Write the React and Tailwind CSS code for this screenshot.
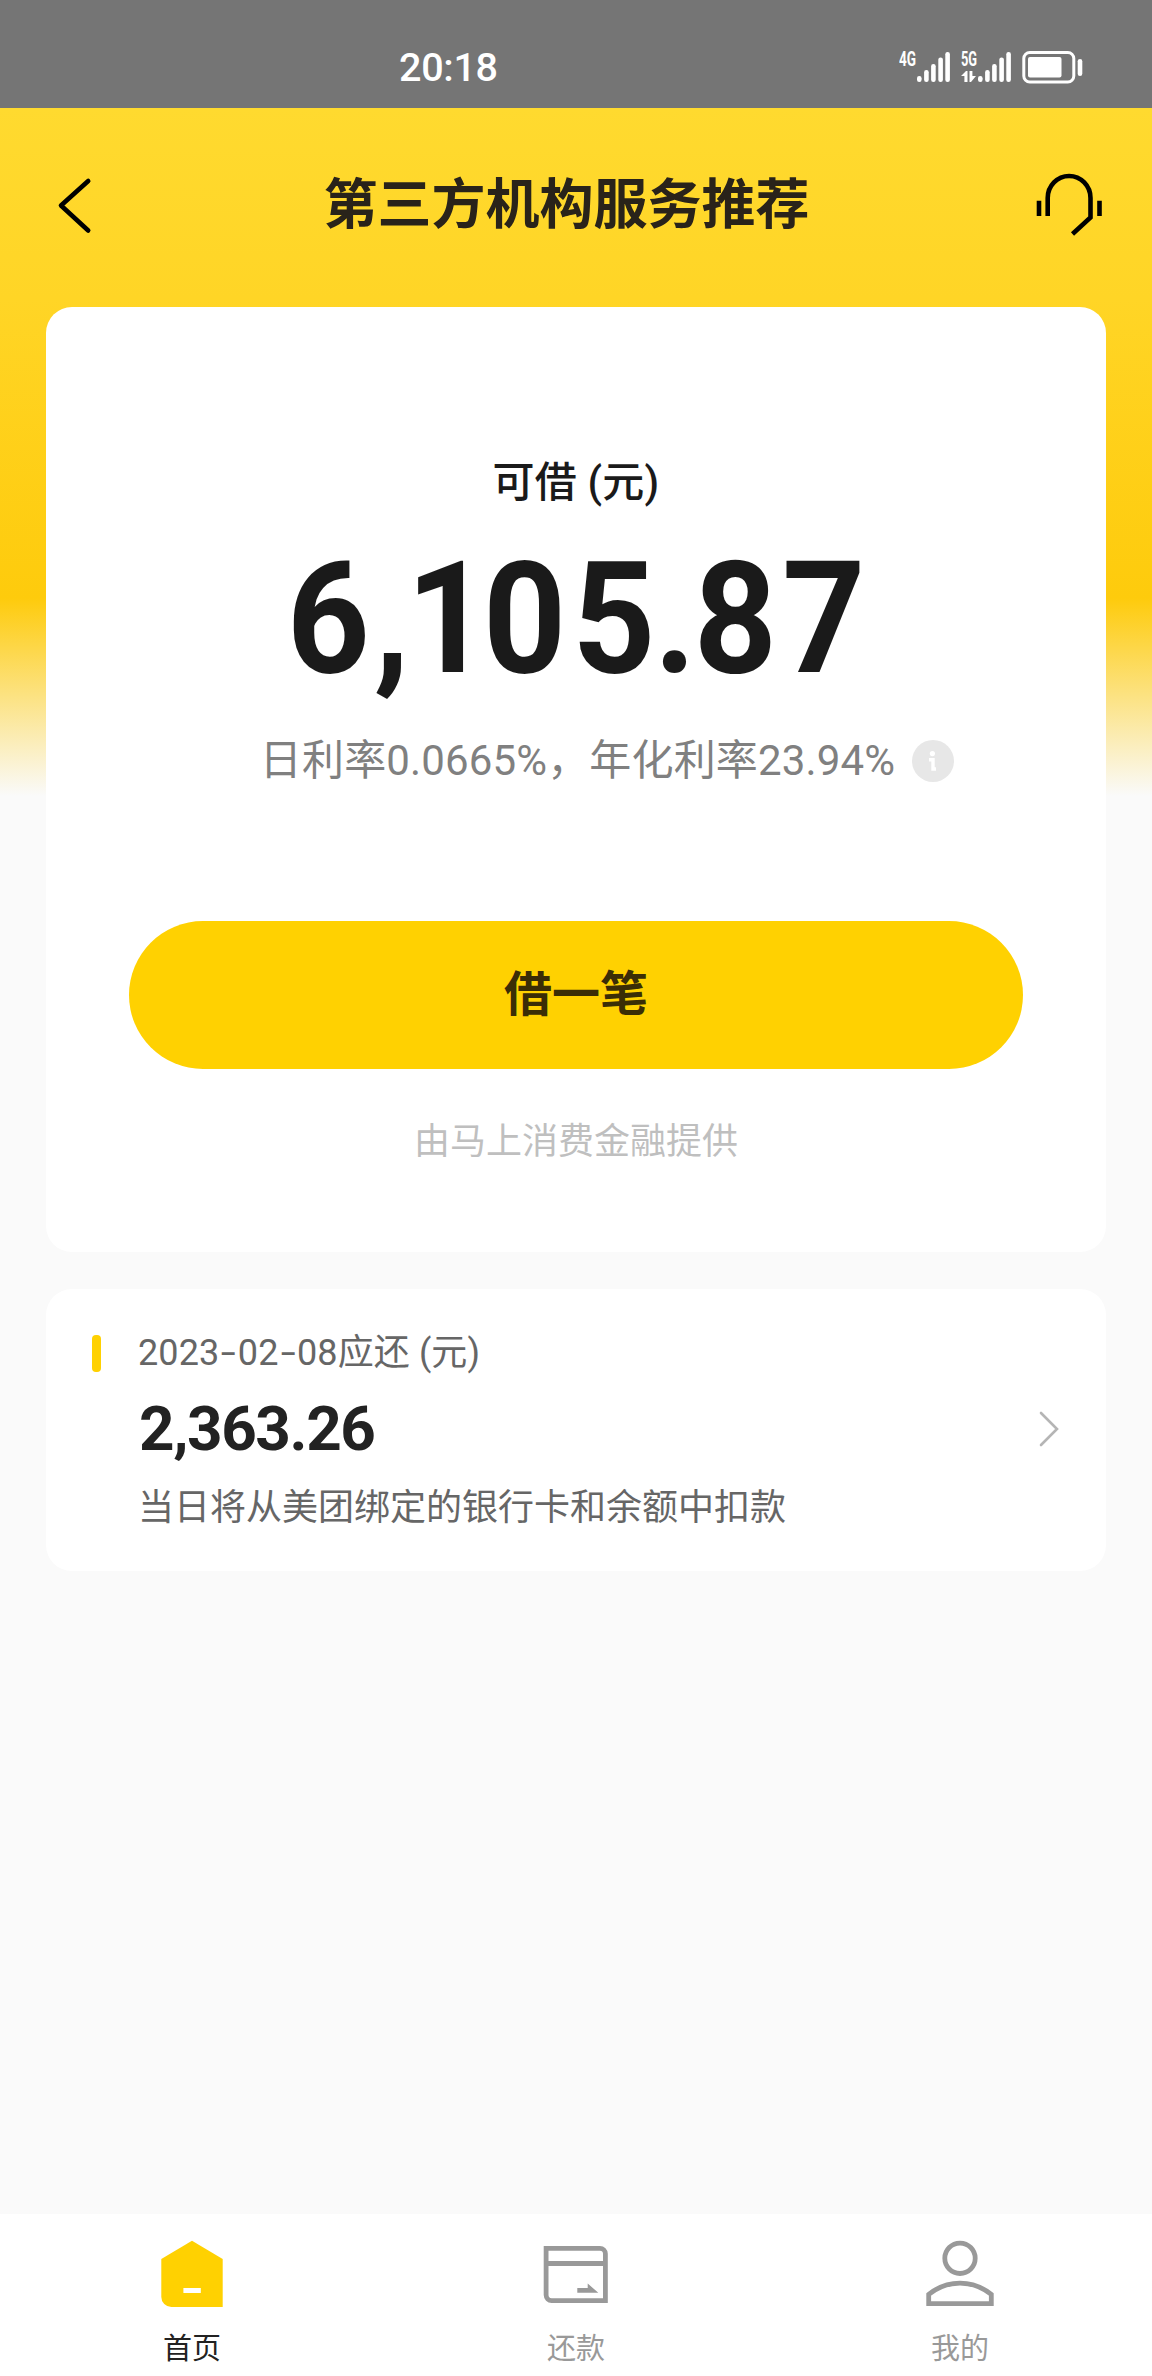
import React from "react";

const SignalBars = () => (
  <svg width="33" height="32" viewBox="0 0 33 32" fill="#fff">
    <rect x="0" y="25" width="4.6" height="6" rx="2.2" />
    <rect x="7.1" y="19" width="4.6" height="12" rx="2.2" />
    <rect x="14.1" y="13" width="4.6" height="18" rx="2.2" />
    <rect x="21.3" y="6.5" width="4.6" height="24.5" rx="2.2" />
    <rect x="28.3" y="1" width="4.6" height="30" rx="2.2" />
  </svg>
);

const Battery = () => (
  <svg width="62" height="34" viewBox="0 0 62 34" fill="#fff">
    <rect x="1.8" y="1.5" width="50" height="29.5" rx="6" fill="none" stroke="#fff" strokeWidth="3" />
    <rect x="6" y="6" width="33.5" height="20.5" rx="2" />
    <rect x="55.7" y="8" width="4.6" height="17" rx="2.3" />
  </svg>
);

const StatusBar = () => (
  <div className="h-[108px] bg-[#757575] flex items-start pt-[51px] text-white">
    <div className="ml-[399px] w-[100px] h-[34px] text-[39.5px] leading-[34px] tracking-[-0.3px] font-medium">20:18</div>
    <div className="ml-[400px] flex">
      <div className="w-[18px] h-[34px]">
        <span className="block w-[26px] origin-left scale-x-[0.68] text-[20px] leading-[16px] font-bold">4G</span>
      </div>
      <SignalBars />
      <div className="ml-[11px] w-[17px] h-[34px] flex flex-col">
        <span className="w-[26px] origin-left scale-x-[0.64] text-[20px] leading-[16px] font-bold">5G</span>
        <svg className="mt-[4px] shrink-0" width="16" height="12" viewBox="0 0 16 12" fill="#fff">
          <path d="M0 5 L5 0 H6.5 V11 H3.4 V5 Z" />
          <path d="M8.5 0 H11.4 V5 H15 L10 11 H8.5 Z" />
        </svg>
      </div>
      <SignalBars />
      <div className="ml-[11px]">
        <Battery />
      </div>
    </div>
  </div>
);

const Header = () => (
  <header className="h-[199px] px-[46px] flex items-start justify-between">
    <svg className="mt-[68px]" width="60" height="60" viewBox="0 0 60 60" fill="none">
      <path d="M42.2 5 L15 29.5 L42.2 54.5" stroke="#000" strokeWidth="4.6" strokeLinecap="round" strokeLinejoin="round" />
    </svg>
    <h1 className="mt-[66px] ml-[-7px] text-[54px] leading-[64px] font-bold text-[#29231a]">第三方机构服务推荐</h1>
    <svg className="mt-[64px] mr-[2px]" width="70" height="66" viewBox="0 0 70 66" fill="none" stroke="#000" strokeWidth="4.6">
      <path d="M13.7 44 V26 A21.4 22 0 0 1 56.5 26 V45.5 L38.5 62" />
      <path d="M5 28.7 V44 M65.5 28.7 V44" />
    </svg>
  </header>
);

const LoanCard = () => (
  <section className="h-[945px] rounded-[26px] bg-white flex flex-col items-center">
    <p className="mt-[151px] text-[42px] leading-[50px] tracking-[0.2px] font-medium text-[#1a1a1a]">可借 (元)</p>
    <p className="mt-[33px] scale-x-[0.93] text-[156px] leading-[156px] font-bold text-[#1a1a1a]">
      <span className="tracking-[4px]">6</span>
      <span className="tracking-[-3.5px]">,</span>
      <span className="tracking-[-7px]">1</span>
      <span className="tracking-[6.5px]">0</span>
      <span className="tracking-[-1.5px]">5</span>
      <span className="tracking-[-2.5px]">.</span>
      <span className="tracking-[5.5px]">8</span>
      <span>7</span>
    </p>
    <div className="mt-[36px] ml-[62px] flex items-center">
      <p className="text-[42px] leading-[56px] tracking-[0.15px] text-[#808080]">日利率0.0665%，年化利率23.94%</p>
      <svg className="ml-[17px]" width="42" height="42" viewBox="0 0 42 42">
        <circle cx="21" cy="21" r="21" fill="#e7e7e7" />
        <circle cx="20.4" cy="13.6" r="2.6" fill="#fff" />
        <path d="M17 19.7 H21 V29 M19.3 29 H24" fill="none" stroke="#fff" strokeWidth="3.4" />
      </svg>
    </div>
    <button className="mt-[132px] w-[894px] h-[148px] rounded-full bg-[#ffd101] text-[48px] leading-[60px] font-bold text-[#3b2d06]">
      借一笔
    </button>
    <p className="mt-[48px] text-[36px] leading-[50px] text-[#bfbfbf]">由马上消费金融提供</p>
  </section>
);

const DateDash = () => <span className="inline-block w-[18.5px] text-center scale-x-[1.5]">-</span>;

const RepayCard = () => (
  <section className="mt-[37px] h-[282px] rounded-[26px] bg-white flex pl-[46px] pr-[46px] pt-[46px]">
    <div className="w-[9px] h-[37px] rounded-[4px] bg-[#ffd101]" />
    <div className="ml-[37px] flex-1">
      <p className="text-[36px] leading-[36px] tracking-[0.1px] text-[#666666]">
        2023<DateDash />02<DateDash />08应还 (元)
      </p>
      <p className="mt-[27px] ml-[1px] text-[62px] leading-[62px] tracking-[-1.4px] font-bold text-[#222222]">2,363.26</p>
      <p className="mt-[28px] text-[36px] leading-[40px] text-[#666666]">当日将从美团绑定的银行卡和余额中扣款</p>
    </div>
    <svg className="mt-[75px]" width="22" height="38" viewBox="0 0 22 38" fill="none">
      <path d="M3 3 L19 19 L3 35" stroke="#b5b5b5" strokeWidth="2.6" strokeLinecap="round" />
    </svg>
  </section>
);

const HomeIcon = () => (
  <svg width="70" height="70" viewBox="0 0 70 70">
    <path d="M35 0.7 L65.7 19 V67 H14.3 A10 10 0 0 1 4.3 57 V19 Z" fill="#ffd101" />
    <rect x="26.4" y="48" width="17.4" height="5" fill="#fff" />
  </svg>
);

const CardIcon = () => (
  <svg width="70" height="70" viewBox="0 0 70 70" fill="none" stroke="#999" strokeWidth="4.8">
    <path d="M5.1 8.3 H58.9 A5.5 5.5 0 0 1 64.4 13.8 V60.6 H10.6 A5.5 5.5 0 0 1 5.1 55.1 Z" />
    <path d="M5.1 23.5 H64.4" />
    <path d="M36.3 48 H46.7 V43.5 L57.3 52.8 H36.3 Z" fill="#999" stroke="none" />
  </svg>
);

const UserIcon = () => (
  <svg width="70" height="70" viewBox="0 0 70 70" fill="none" stroke="#999" strokeWidth="4.8">
    <circle cx="35" cy="18.3" r="15.2" />
    <path d="M3.7 63.6 V54.3 Q18 43.1 35 43.1 Q52 43.1 66.3 54.3 V63.6 Z" />
  </svg>
);

const tabs = [
  { label: "首页", icon: HomeIcon, color: "text-[#222222]" },
  { label: "还款", icon: CardIcon, color: "text-[#999999]" },
  { label: "我的", icon: UserIcon, color: "text-[#999999]" },
];

const TabBar = () => (
  <nav className="h-[162px] bg-white grid grid-cols-3">
    {tabs.map(({ label, icon: Icon, color }) => (
      <div key={label} className="flex flex-col items-center pt-[26px]">
        <Icon />
        <span className={`mt-[21px] text-[29px] leading-[36px] ${color}`}>{label}</span>
      </div>
    ))}
  </nav>
);

export default function App() {
  return (
    <div className="w-[1152px] h-[2376px] flex flex-col bg-[#fafafa] font-[Roboto,'Noto_Sans_CJK_SC',sans-serif]">
      <StatusBar />
      <div className="flex-1 bg-[linear-gradient(to_bottom,#ffda2f_0px,#ffd526_190px,#fecb0c_490px,#fafafa_688px)]">
        <Header />
        <main className="px-[46px]">
          <LoanCard />
          <RepayCard />
        </main>
      </div>
      <TabBar />
    </div>
  );
}
